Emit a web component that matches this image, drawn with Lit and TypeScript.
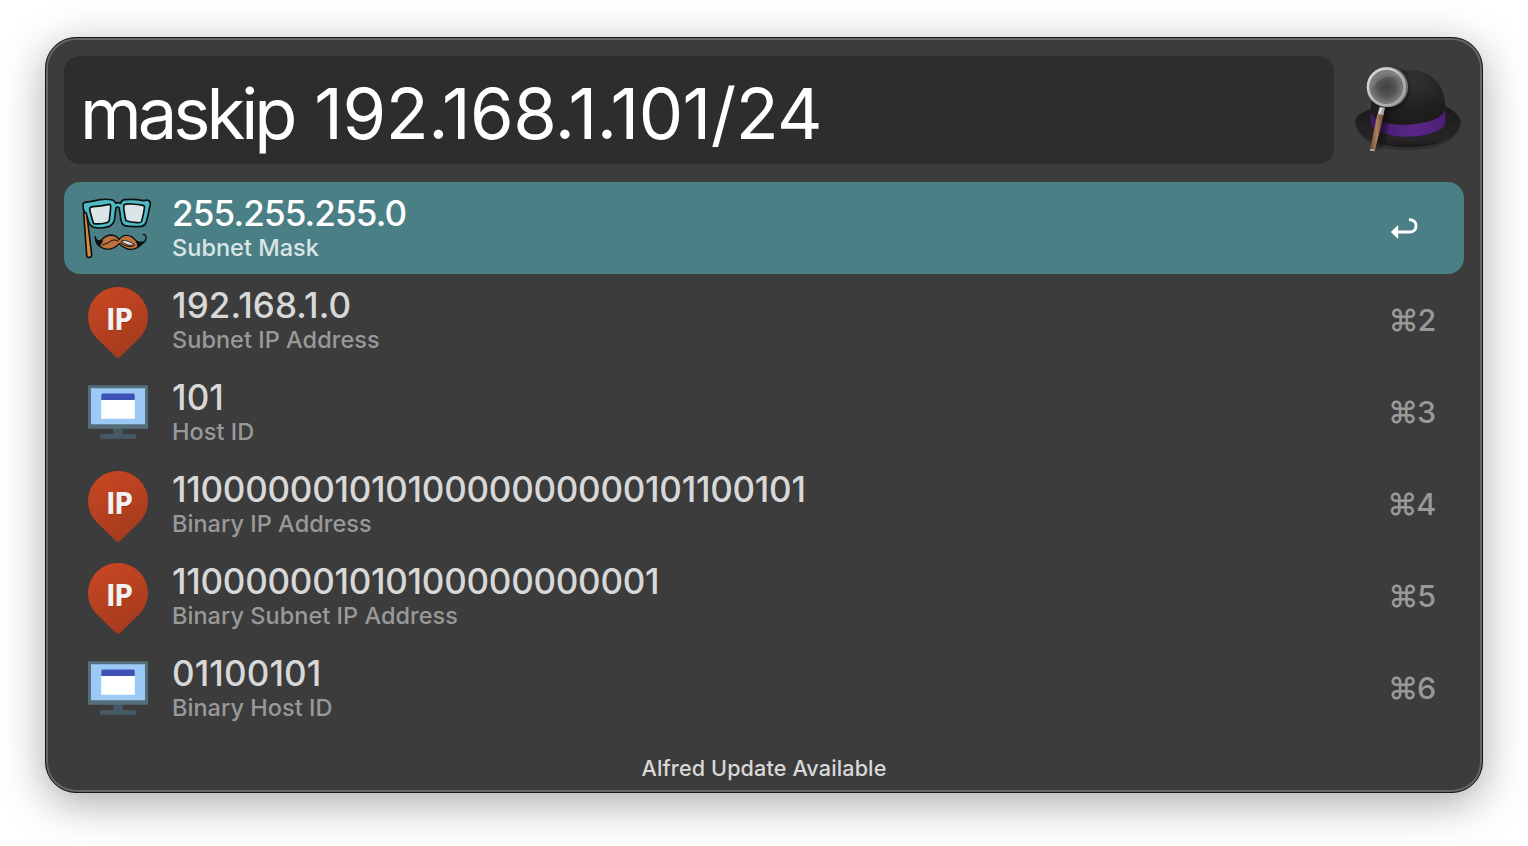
import { LitElement, html, css, svg } from "lit";
import { customElement, property } from "lit/decorators.js";

type Kind = "mask" | "pin" | "monitor";
interface Row { icon: Kind; title: string; sub: string; key: string; }

const ROWS: Row[] = [
  { icon: "mask", title: "255.255.255.0", sub: "Subnet Mask", key: "" },
  { icon: "pin", title: "192.168.1.0", sub: "Subnet IP Address", key: "2" },
  { icon: "monitor", title: "101", sub: "Host ID", key: "3" },
  { icon: "pin", title: "11000000101010000000000101100101", sub: "Binary IP Address", key: "4" },
  { icon: "pin", title: "110000001010100000000001", sub: "Binary Subnet IP Address", key: "5" },
  { icon: "monitor", title: "01100101", sub: "Binary Host ID", key: "6" },
];

@customElement("result-icon")
class ResultIcon extends LitElement {
  @property() kind: Kind = "pin";
  static styles = css`
    :host { display: block; width: 84px; height: 76px; flex: none; }
    svg { display: block; }
    .ip { font: 700 30.5px "Open Sans", "Noto Sans", sans-serif; letter-spacing: -1.8px; }
  `;
  private mask() {
    return svg`
      <g stroke="#0b1112" stroke-width="5" stroke-linejoin="round" stroke-linecap="round">
        <path d="M23 68Q28 63 32 69L47 194Q47 202 39 202Q32 202 32 195Z" fill="#e08a3c"/>
        <path fill="#4fb9c4" d="M21 45Q21 38 27 37Q52 34 72 29Q94 26 110 30Q117 34 119 40Q126 36 134 40Q136 31 145 29Q176 26 202 32Q214 28 220 33Q225 37 222 48Q219 55 219 62Q215 82 210 98Q206 108 196 109Q168 112 146 107Q136 102 134 85Q132 66 129 53Q125 49 120 53Q117 75 115 91Q111 105 98 110Q76 117 54 112Q42 108 38 95Q33 81 31 70Q22 65 22 56Z"/>
        <path fill="#d9e5e6" d="M41 55Q42 51 51 50Q75 48 100 43Q105 43 104 53L100 91Q98 98 88 99Q70 103 53 101Q49 91 46 78Q42 66 41 55Z"/>
        <path fill="#d9e5e6" d="M144 44Q151 41 166 42Q187 43 201 46Q207 48 205 56Q202 77 197 94Q194 99 184 98Q164 97 150 92Q147 84 145 68Q142 52 144 44Z"/>
      </g>
      <g stroke="#0b1112" stroke-width="4" stroke-linejoin="round" stroke-linecap="round">
        <path fill="#bf713b" d="M57 140Q62 158 76 150Q90 135 107 135Q122 136 129 149Q137 135 153 136Q168 137 177 149Q186 160 197 157Q192 168 184 173Q173 180 154 177Q139 173 129 161Q118 174 103 177Q82 179 72 169Q62 163 60 153Z"/>
        <path fill="none" d="M188 166Q212 158 210 141Q208 132 202 134"/>
        <path fill="none" stroke-width="3" d="M80 165Q98 159 108 151Q116 147 126 153M133 158Q150 174 172 168"/>
        <path fill="#e4e8e5" stroke-width="2.5" d="M138 152Q156 149 176 165Q158 169 144 160Z"/>
      </g>
      <path fill="#0b1112" d="M56 139Q64 157 76 149L82 153Q75 160 72 169Q60 163 58 151ZM177 149Q186 159 206 153Q199 167 184 174Q184 160 177 149Z"/>`;
  }
  private pin() {
    return svg`
      <defs><linearGradient id="g" x1="0" y1="0" x2=".45" y2="1">
        <stop offset="0" stop-color="#cb4822"/><stop offset="1" stop-color="#a63b1e"/>
      </linearGradient></defs>
      <path fill="url(#g)" d="M20.8 56.2A30 30 0 1 1 63.2 56.2L44 75Q42 76.6 40 75Z"/>
      <text class="ip" x="30.2" y="49" fill="#6e2410" opacity=".4">IP</text>
      <text class="ip" x="29.8" y="48.3" fill="#f1f1f1">IP</text>`;
  }
  private monitor() {
    return svg`
      <path fill="#455a64" d="M37.3 54h9.4v6H58q2 0 2 2v2.7H24V62q0-2 2-2h11.3z"/>
      <path fill="#546e7a" d="M12 11.3h60v43.4H12z"/>
      <path fill="#9bcaf7" d="M15 14.3h54v36H15z"/>
      <path fill="#fff" d="M25.2 20h33.6v24.7H25.2z"/>
      <path fill="#3f51b5" d="M25.2 26V21q0-1.5 1.5-1.5h30.6q1.5 0 1.5 1.5v5z"/>`;
  }
  render() {
    const m = this.kind === "mask";
    return html`<svg width="84" height="76" viewBox=${m ? "0 0 252 228" : "0 0 84 76"}>
      ${m ? this.mask() : this.kind === "pin" ? this.pin() : this.monitor()}</svg>`;
  }
}

@customElement("app-root")
class AppRoot extends LitElement {
  static styles = css`
    :host { display: block; box-sizing: border-box; width: 1528px; height: 846px; padding: 37px 45px 53px;
      background: #fff; font-family: Inter, "Liberation Sans", sans-serif; font-weight: 450; overflow: hidden; }
    .window { box-sizing: border-box; width: 1438px; height: 756px; border: 1px solid #181818; border-radius: 31px;
      background: #3c3c3c; padding: 18px; display: flex; flex-direction: column;
      box-shadow: inset 0 0 0 2px #666, 0 10px 44px rgba(0,0,0,.34); }
    .head { display: flex; gap: 18px; height: 108px; margin-bottom: 18px; }
    .query { box-sizing: border-box; width: 1270px; border-radius: 16px; background: #2d2d2d; color: #fff;
      padding-left: 16px; font-size: 70.5px; font-weight: 380; line-height: 115px; white-space: pre; }
    .keyword { letter-spacing: -4px; }
    .argument { letter-spacing: -.5px; margin-left: 5px; }
    .row { display: flex; box-sizing: border-box; height: 92px; border-radius: 16px; padding: 8px 28px 8px 12px; }
    .text { flex: 1; padding: 3px 0 0 12px; white-space: nowrap; }
    .title { font-size: 35px; line-height: 40px; color: #d8d8d8; letter-spacing: .12px; }
    .title.long { letter-spacing: -.27px; }
    .sub { font-size: 23.5px; line-height: 29px; color: #999; letter-spacing: .03px; }
    .key { font-size: 30.5px; line-height: 75px; color: #999; letter-spacing: -1.2px; margin-right: 1px; }
    .selected { background: #4a8085; }
    .selected .title { color: #fff; letter-spacing: -.85px; }
    .selected .sub { color: #d9e5e6; }
    .foot { text-align: center; padding-top: 12px; font-size: 21.6px; line-height: 44px; color: #d8d8d8; letter-spacing: .12px; }
    svg { display: block; }
    .enter { margin: 26px 12px 0 0; }
  `;
  private hat() {
    return html`<svg width="112" height="108" viewBox="36 18 336 324">
      <defs>
        <radialGradient id="crown" cx=".55" cy=".15" r=".9"><stop offset="0" stop-color="#343334"/><stop offset=".6" stop-color="#211f20"/><stop offset="1" stop-color="#1b191a"/></radialGradient>
        <linearGradient id="brim" x1="0" y1="0" x2="0" y2="1"><stop offset="0" stop-color="#1b1a1b"/><stop offset=".8" stop-color="#272526"/><stop offset="1" stop-color="#1a191a"/></linearGradient>
        <linearGradient id="band"><stop offset="0" stop-color="#3f1a66"/><stop offset=".25" stop-color="#4d2178"/><stop offset=".6" stop-color="#5a2688"/><stop offset="1" stop-color="#4b2075"/></linearGradient>
        <radialGradient id="lens"><stop offset="0" stop-color="#414141"/><stop offset=".5" stop-color="#545454"/><stop offset="1" stop-color="#868686"/></radialGradient>
        <linearGradient id="rim" x1="0" y1="0" x2="1" y2="1"><stop offset="0" stop-color="#e0e0e0"/><stop offset=".5" stop-color="#b9b9b9"/><stop offset="1" stop-color="#a0a0a0"/></linearGradient>
        <linearGradient id="wood"><stop offset="0" stop-color="#6c4a33"/><stop offset=".5" stop-color="#ad8059"/><stop offset="1" stop-color="#6b452b"/></linearGradient>
        <filter id="soft" x="-30%" y="-30%" width="160%" height="160%"><feGaussianBlur stdDeviation="5"/></filter>
      </defs>
      <path fill="#303030" d="M50 232Q70 300 204 301Q336 300 360 232Z"/>
      <path fill="url(#brim)" d="M92 178Q45 193 46 217C49 263 116 292 204 292S360 263 362 217Q361 191 316 169Z"/>
      <path fill="url(#crown)" d="M92 190C92 103 135 60 205 60C278 60 316 103 316 181Q316 231 204 231Q92 231 92 190Z"/>
      <path fill="url(#band)" d="M92 179Q94 209 140 220Q202 231 260 216Q309 203 316 180V215Q316 237 270 251Q206 269 139 253Q93 240 92 216Z"/>
      <path d="M150 180Q210 172 205 104Q200 58 158 53L120 196L108 297L130 288Z" fill="#080808" opacity=".55" filter="url(#soft)"/>
      <path d="M112 192L131 194L105 300Q98 304 90 299Z" fill="url(#wood)"/>
      <path d="M90 296L105 299L104 303H90Z" fill="#aaa"/>
      <path d="M119 170L135 173L130 196L113 193Z" fill="#a8a8a8"/><path d="M120 173L127 174L121 192L115 191Z" fill="#ddd"/>
      <ellipse cx="145" cy="111" rx="59" ry="60" fill="#777"/>
      <circle cx="139" cy="111" r="55" fill="url(#lens)" stroke="url(#rim)" stroke-width="8"/>
      <circle cx="139" cy="111" r="49" fill="none" stroke="#777" stroke-width="2"/>
      <path fill="#c7c7c7" opacity=".15" d="M92 115Q91 72 137 64Q166 64 177 80Q129 72 92 115Z"/>
    </svg>`;
  }
  render() {
    return html`<div class="window">
      <div class="head"><div class="query"><span class="keyword">maskip </span><span class="argument">192.168.1.101/24</span></div>${this.hat()}</div>
      ${ROWS.map((r) => html`<div class="row ${r.key ? "" : "selected"}">
        <result-icon .kind=${r.icon}></result-icon>
        <div class="text"><div class="title ${r.title.length > 16 ? "long" : ""}">${r.title}</div><div class="sub">${r.sub}</div></div>
        ${r.key ? html`<div class="key">⌘${r.key}</div>` : html`<svg class="enter" width="34" height="26" viewBox="0 0 34 26">
          <path d="M0.8 16L8.2 9V23Z" fill="#fff"/><path d="M7 16H20Q26 15.6 26 10Q26 4 19 3.7" fill="none" stroke="#fff" stroke-width="2.8"/></svg>`}
      </div>`)}
      <div class="foot">Alfred Update Available</div>
    </div>`;
  }
}
